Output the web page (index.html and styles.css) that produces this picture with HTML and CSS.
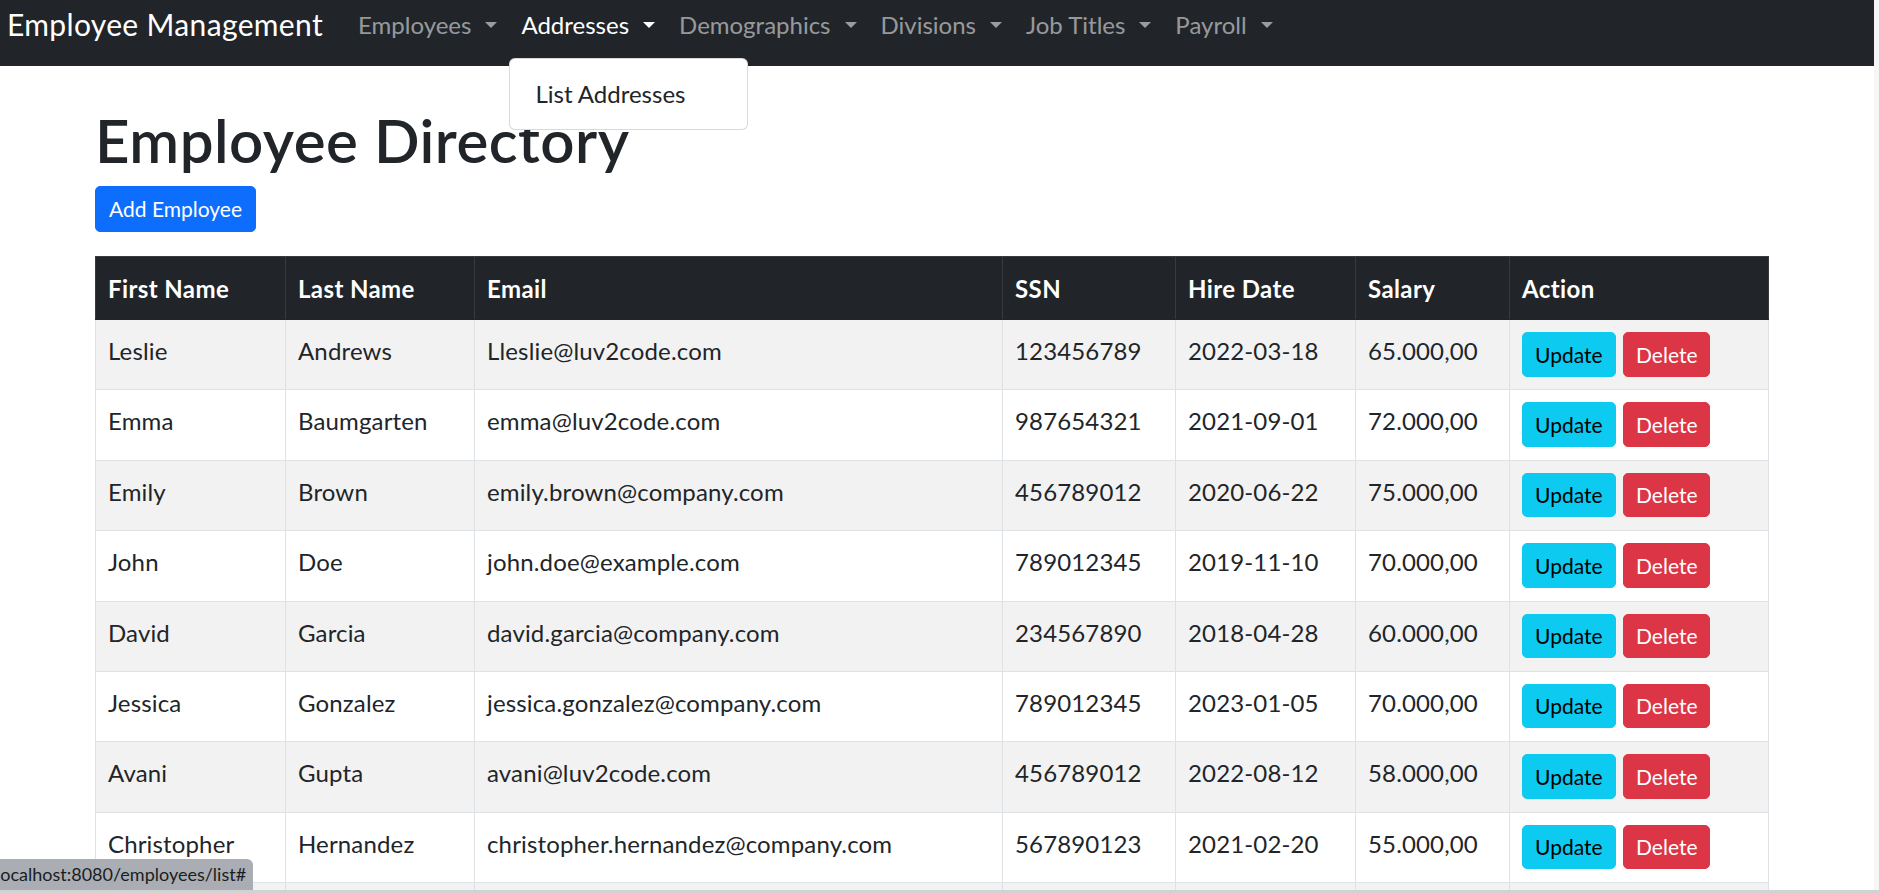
FILE: index.html
```html
<!DOCTYPE html>
<html lang="en">
<head>
<meta charset="utf-8">
<title>Employee Directory</title>
<link rel="stylesheet" href="styles.css">
</head>
<body>
<nav class="navbar">
  <a class="brand" href="#">Employee Management</a>
  <ul class="nav">
    <li class="nav-item"><a class="nav-link dropdown-toggle" href="#">Employees</a></li>
    <li class="nav-item">
      <a class="nav-link dropdown-toggle active" href="#">Addresses</a>
      <ul class="dropdown-menu">
        <li><a class="dropdown-item" href="#">List Addresses</a></li>
      </ul>
    </li>
    <li class="nav-item"><a class="nav-link dropdown-toggle" href="#">Demographics</a></li>
    <li class="nav-item"><a class="nav-link dropdown-toggle" href="#">Divisions</a></li>
    <li class="nav-item"><a class="nav-link dropdown-toggle" href="#">Job Titles</a></li>
    <li class="nav-item"><a class="nav-link dropdown-toggle" href="#">Payroll</a></li>
  </ul>
</nav>

<main class="container">
  <h1 class="title">Employee Directory</h1>
  <div class="toolbar">
    <a class="btn btn-primary btn-add" href="#">Add Employee</a>
  </div>
  <table class="table">
    <colgroup>
      <col class="col-first">
      <col class="col-last">
      <col class="col-email">
      <col class="col-ssn">
      <col class="col-date">
      <col class="col-salary">
      <col class="col-action">
    </colgroup>
    <thead>
      <tr><th>First Name</th><th>Last Name</th><th>Email</th><th>SSN</th><th>Hire Date</th><th>Salary</th><th>Action</th></tr>
    </thead>
    <tbody>
      <tr><td>Leslie</td><td>Andrews</td><td>Lleslie@luv2code.com</td><td>123456789</td><td>2022-03-18</td><td>65.000,00</td>
        <td><div class="actions"><a class="btn btn-info" href="#">Update</a><a class="btn btn-danger" href="#">Delete</a></div></td></tr>
      <tr><td>Emma</td><td>Baumgarten</td><td>emma@luv2code.com</td><td>987654321</td><td>2021-09-01</td><td>72.000,00</td>
        <td><div class="actions"><a class="btn btn-info" href="#">Update</a><a class="btn btn-danger" href="#">Delete</a></div></td></tr>
      <tr><td>Emily</td><td>Brown</td><td>emily.brown@company.com</td><td>456789012</td><td>2020-06-22</td><td>75.000,00</td>
        <td><div class="actions"><a class="btn btn-info" href="#">Update</a><a class="btn btn-danger" href="#">Delete</a></div></td></tr>
      <tr><td>John</td><td>Doe</td><td>john.doe@example.com</td><td>789012345</td><td>2019-11-10</td><td>70.000,00</td>
        <td><div class="actions"><a class="btn btn-info" href="#">Update</a><a class="btn btn-danger" href="#">Delete</a></div></td></tr>
      <tr><td>David</td><td>Garcia</td><td>david.garcia@company.com</td><td>234567890</td><td>2018-04-28</td><td>60.000,00</td>
        <td><div class="actions"><a class="btn btn-info" href="#">Update</a><a class="btn btn-danger" href="#">Delete</a></div></td></tr>
      <tr><td>Jessica</td><td>Gonzalez</td><td>jessica.gonzalez@company.com</td><td>789012345</td><td>2023-01-05</td><td>70.000,00</td>
        <td><div class="actions"><a class="btn btn-info" href="#">Update</a><a class="btn btn-danger" href="#">Delete</a></div></td></tr>
      <tr><td>Avani</td><td>Gupta</td><td>avani@luv2code.com</td><td>456789012</td><td>2022-08-12</td><td>58.000,00</td>
        <td><div class="actions"><a class="btn btn-info" href="#">Update</a><a class="btn btn-danger" href="#">Delete</a></div></td></tr>
      <tr><td>Christopher</td><td>Hernandez</td><td>christopher.hernandez@company.com</td><td>567890123</td><td>2021-02-20</td><td>55.000,00</td>
        <td><div class="actions"><a class="btn btn-info" href="#">Update</a><a class="btn btn-danger" href="#">Delete</a></div></td></tr>
      <tr class="row-more"><td></td><td></td><td></td><td></td><td></td><td></td><td></td></tr>
    </tbody>
  </table>
</main>

<div class="status-bubble">localhost:8080/employees/list#</div>
<div class="edge-right"></div>
<div class="edge-bottom"></div>
</body>
</html>
```

FILE: styles.css
```css
* {
  box-sizing: border-box;
}

html,
body {
  margin: 0;
  padding: 0;
  height: 100%;
  overflow: hidden;
}

body {
  font-family: Lato, "Segoe UI", "Liberation Sans", sans-serif;
  font-size: 24px;
  line-height: 36px;
  color: #212529;
  background: #fff;
}

/* ---------- Navbar ---------- */
.navbar {
  height: 66px;
  background: #212529;
  display: flex;
  align-items: flex-start;
}

.brand {
  color: #fff;
  font-size: 30px;
  line-height: 45px;
  letter-spacing: 0.35px;
  padding: 2px 0 0 7px;
  margin-right: 23px;
  text-decoration: none;
  white-space: nowrap;
}

.nav {
  list-style: none;
  margin: 0;
  padding: 7px 0 0;
  display: flex;
}

.nav-item {
  position: relative;
}

.nav-link {
  display: block;
  padding: 0 12px;
  color: rgba(255, 255, 255, 0.55);
  text-decoration: none;
  line-height: 36px;
  white-space: nowrap;
}

.nav-link.active {
  color: #fff;
}

.dropdown-toggle::after {
  content: "";
  display: inline-block;
  margin-left: 14px;
  vertical-align: 0.27em;
  border-top: 6px solid;
  border-left: 6px solid transparent;
  border-right: 6px solid transparent;
}

.dropdown-menu {
  position: absolute;
  top: 51px;
  left: 0;
  min-width: 239px;
  margin: 0;
  padding: 11px 0;
  list-style: none;
  background: #fff;
  border: 1px solid rgba(0, 0, 0, 0.15);
  border-radius: 6px;
  z-index: 10;
}

.dropdown-item {
  display: block;
  padding: 6px 25px;
  color: #212529;
  text-decoration: none;
  white-space: nowrap;
}

/* ---------- Content ---------- */
.container {
  width: 1673px;
  margin-left: 95px;
  padding-top: 37.5px;
}

.title {
  margin: 0 0 10.5px;
  font-size: 60px;
  line-height: 72px;
  font-weight: 600;
  letter-spacing: 0.5px;
}

.toolbar {
  display: flex;
  margin-bottom: 24px;
}

.btn {
  display: inline-block;
  font-size: 21px;
  line-height: 31.5px;
  padding: 5.5px 12px;
  border: 1px solid transparent;
  border-radius: 5px;
  text-decoration: none;
  white-space: nowrap;
  letter-spacing: 0;
}

.btn-add {
  padding: 6.25px 13px;
}

.btn-primary {
  background: #0d6efd;
  border-color: #0d6efd;
  color: #fff;
}

.btn-info {
  background: #0dcaf0;
  border-color: #0dcaf0;
  color: #000;
}

.btn-danger {
  background: #dc3545;
  border-color: #dc3545;
  color: #fff;
}

.actions {
  display: flex;
  gap: 7.5px;
}

/* ---------- Table ---------- */
.table {
  width: 1673px;
  table-layout: fixed;
  border-collapse: collapse;
}

.col-first { width: 190px; }
.col-last { width: 189px; }
.col-email { width: 528px; }
.col-ssn { width: 173px; }
.col-date { width: 180px; }
.col-salary { width: 154px; }
.col-action { width: 259px; }

.table th,
.table td {
  padding: 13px 12px 11px;
  text-align: left;
  vertical-align: top;
  border: 1px solid #dee2e6;
  white-space: nowrap;
}

.table td {
  letter-spacing: 0.15px;
}

.table td:last-child {
  padding-top: 12px;
  padding-bottom: 12px;
}

.table thead tr {
  height: 63px;
}

.table thead th {
  padding-top: 13.5px;
  background: #212529;
  color: #fff;
  font-weight: 700;
  letter-spacing: 0.4px;
  border-color: #373b3e;
  border-bottom-color: #212529;
}

.table tbody tr {
  height: 70.4px;
}

.table tbody tr:nth-child(odd) td {
  background: #f2f2f2;
}

/* ---------- Browser chrome overlays ---------- */
.status-bubble {
  position: fixed;
  left: 0;
  bottom: 3px;
  width: 253px;
  height: 31px;
  padding-top: 1px;
  background: #aaaeb4;
  border-top-right-radius: 6px;
  color: #1b1d20;
  font-size: 18px;
  line-height: 28px;
  text-indent: -4px;
  white-space: nowrap;
  overflow: hidden;
}

.edge-right {
  position: fixed;
  top: 0;
  right: 0;
  bottom: 0;
  width: 5px;
  background: #f6f6f7;
}

.edge-bottom {
  position: fixed;
  left: 0;
  right: 0;
  bottom: 0;
  height: 3px;
  background: #d2d2d2;
}
```
